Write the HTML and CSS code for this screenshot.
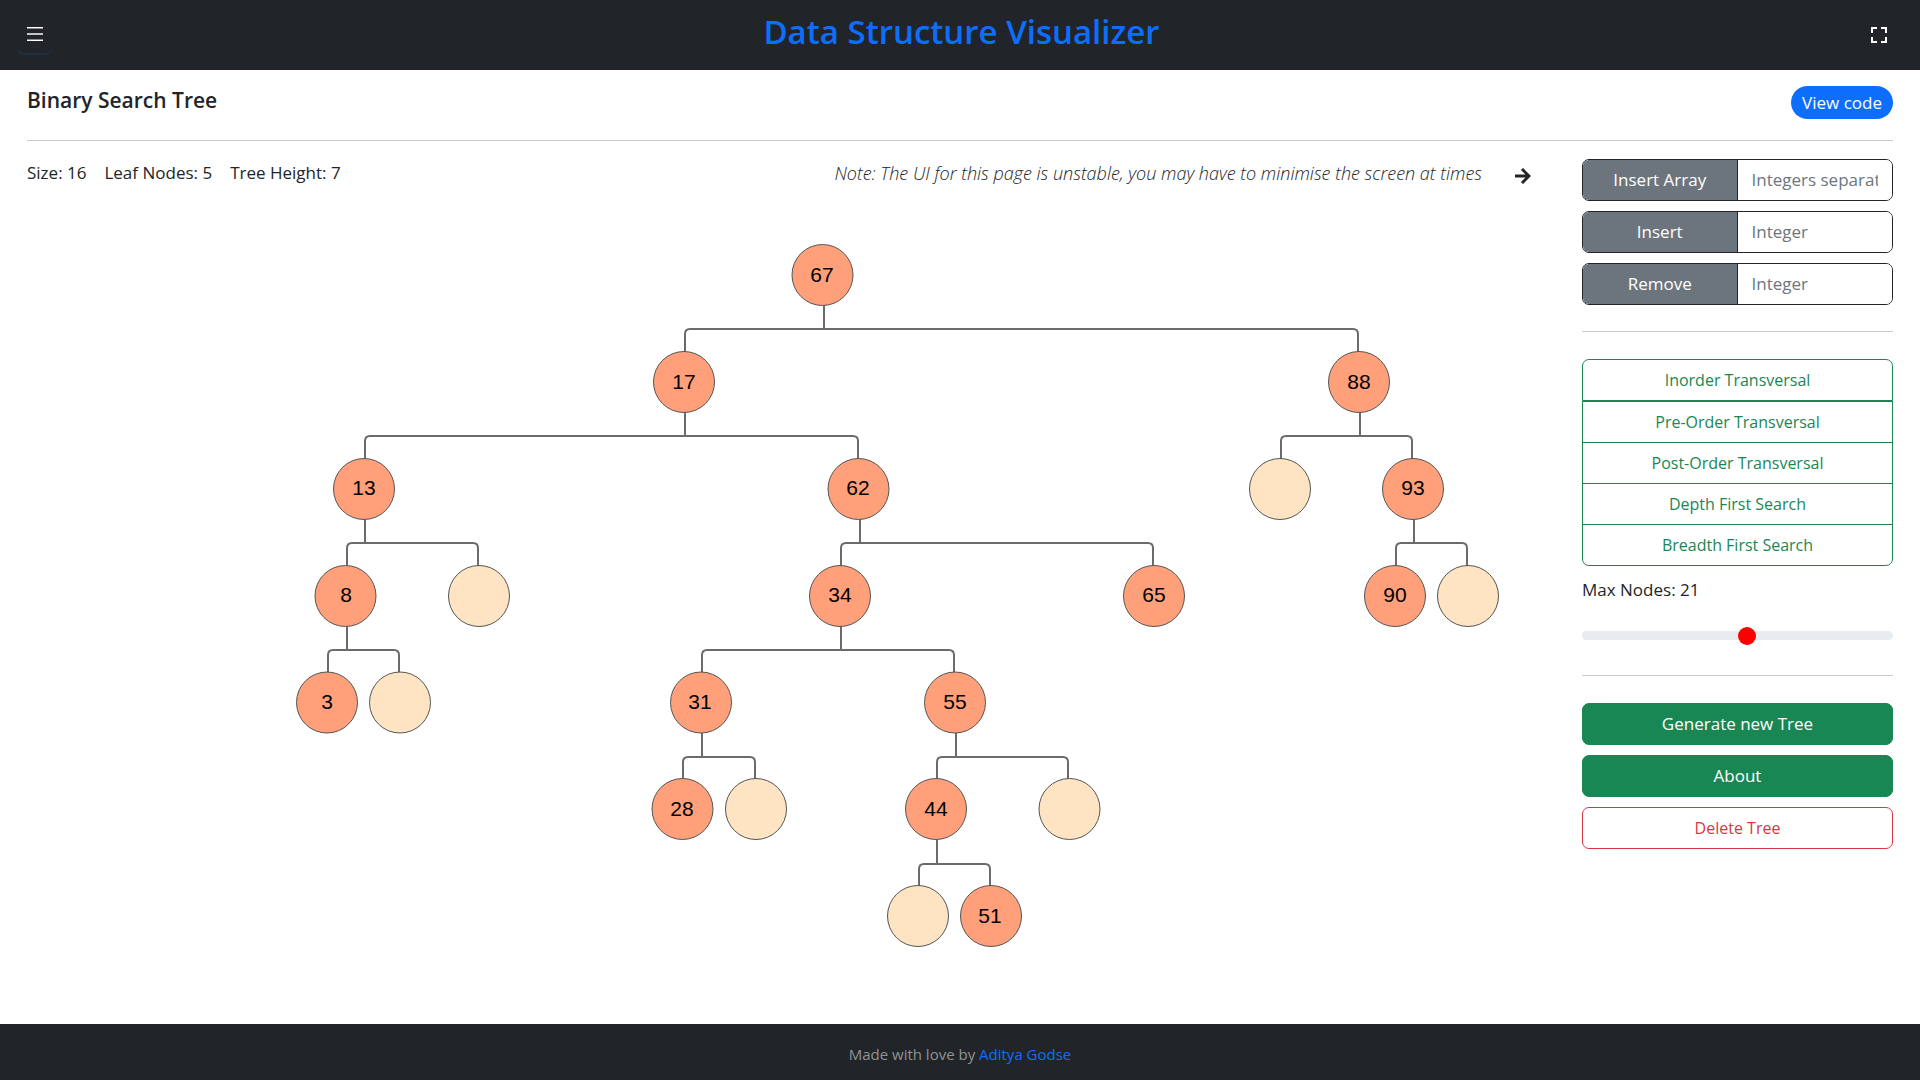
FILE: index.html
```html
<!DOCTYPE html>
<html lang="en">
<head>
<meta charset="utf-8">
<meta name="viewport" content="width=device-width, initial-scale=1">
<title>Data Structure Visualizer</title>
<link rel="stylesheet" href="styles.css">
</head>
<body>
<header class="topbar">
  <button class="icon-button menu-button" type="button" aria-label="Menu">
    <svg width="16" height="14" viewBox="0 0 16 14" shape-rendering="crispEdges"><path fill="#fff" d="M0 0h16v1H0zM0 13h16v1H0z"/><path fill="#888a8c" d="M0 1h16v1H0zM0 12h16v1H0z"/><path fill="#c4c5c6" d="M0 6h16v2H0z"/></svg>
  </button>
  <h1 class="brand">Data Structure Visualizer</h1>
  <button class="icon-button" type="button" aria-label="Full screen">
    <svg width="16" height="16" viewBox="0 0 16 16" fill="none" stroke="#fff" stroke-width="2"><path d="M1 6V1h5M10 1h5v5M15 10v5h-5M6 15H1v-5"/></svg>
  </button>
</header>

<main class="page">
  <div class="page-head">
    <h2 class="page-title">Binary Search Tree</h2>
    <a class="badge" href="#code">View code</a>
  </div>
  <div class="workspace">
    <section class="viewer">
      <div class="info">
        <span>Size: 16</span>
        <span>Leaf Nodes: 5</span>
        <span>Tree Height: 7</span>
        <em class="note">Note: The UI for this page is unstable, you may have to minimise the screen at times</em>
        <button class="icon-button" type="button" aria-label="Hide controls">
          <svg width="16" height="16" viewBox="0 0 16 16" fill="none" stroke="#212529" stroke-width="3"><path d="M0 8h14M7 1l7 7-7 7"/></svg>
        </button>
      </div>
      <svg class="tree" viewBox="27 210 1555 780" role="img" aria-label="Binary search tree">
        <defs><circle id="node" r="30.5"/></defs>
        <g class="links">
          <path d="M824 305V329M685 352V334q0-5 5-5H1353q5 0 5 5V352"/>
          <path d="M685 412V436M365 459V441q0-5 5-5H853q5 0 5 5V459"/>
          <path d="M1360 412V436M1281 459V441q0-5 5-5H1407q5 0 5 5V459"/>
          <path d="M365 519V543M347 566V548q0-5 5-5H473q5 0 5 5V566"/>
          <path d="M860 519V543M841 566V548q0-5 5-5H1148q5 0 5 5V566"/>
          <path d="M1414 519V543M1396 566V548q0-5 5-5H1462q5 0 5 5V566"/>
          <path d="M347 626V650M328 673V655q0-5 5-5H394q5 0 5 5V673"/>
          <path d="M841 626V650M702 673V655q0-5 5-5H949q5 0 5 5V673"/>
          <path d="M702 733V757M683 780V762q0-5 5-5H750q5 0 5 5V780"/>
          <path d="M956 733V757M937 780V762q0-5 5-5H1063q5 0 5 5V780"/>
          <path d="M937 840V864M919 887V869q0-5 5-5H985q5 0 5 5V887"/>
        </g>
        <g class="filled">
          <use href="#node" x="822.5" y="275"/>
          <use href="#node" x="684" y="382"/>
          <use href="#node" x="1359" y="382"/>
          <use href="#node" x="364" y="489"/>
          <use href="#node" x="858.5" y="489"/>
          <use href="#node" x="1413" y="489"/>
          <use href="#node" x="345.5" y="596"/>
          <use href="#node" x="840" y="596"/>
          <use href="#node" x="1154" y="596"/>
          <use href="#node" x="1395" y="596"/>
          <use href="#node" x="327" y="702.5"/>
          <use href="#node" x="701" y="702.5"/>
          <use href="#node" x="955" y="702.5"/>
          <use href="#node" x="682.5" y="809"/>
          <use href="#node" x="936" y="809"/>
          <use href="#node" x="991" y="916"/>
        </g>
        <g class="vacant">
          <use href="#node" x="1280" y="489"/>
          <use href="#node" x="479" y="596"/>
          <use href="#node" x="1468" y="596"/>
          <use href="#node" x="400" y="702.5"/>
          <use href="#node" x="756" y="809"/>
          <use href="#node" x="1069.5" y="809"/>
          <use href="#node" x="918" y="916"/>
        </g>
        <g class="values">
          <text x="822" y="282">67</text>
          <text x="684" y="389">17</text>
          <text x="1359" y="389">88</text>
          <text x="364" y="495">13</text>
          <text x="858" y="495">62</text>
          <text x="1413" y="495">93</text>
          <text x="346" y="602">8</text>
          <text x="840" y="602">34</text>
          <text x="1154" y="602">65</text>
          <text x="1395" y="602">90</text>
          <text x="327" y="709">3</text>
          <text x="700" y="709">31</text>
          <text x="955" y="709">55</text>
          <text x="682" y="816">28</text>
          <text x="936" y="816">44</text>
          <text x="990" y="923">51</text>
        </g>
      </svg>
    </section>

    <aside class="controls">
      <div class="stack">
        <div class="input-group">
          <button type="button">Insert Array</button>
          <input type="text" aria-label="Array to insert" placeholder="Integers separated by comma">
        </div>
        <div class="input-group">
          <button type="button">Insert</button>
          <input type="text" aria-label="Value to insert" placeholder="Integer">
        </div>
        <div class="input-group">
          <button type="button">Remove</button>
          <input type="text" aria-label="Value to remove" placeholder="Integer">
        </div>
      </div>
      <hr class="rule">
      <div class="button-group">
        <button type="button">Inorder Transversal</button>
        <button type="button">Pre-Order Transversal</button>
        <button type="button">Post-Order Transversal</button>
        <button type="button">Depth First Search</button>
        <button type="button">Breadth First Search</button>
      </div>
      <label class="range-label" for="max-nodes">Max Nodes: 21</label>
      <input class="range" id="max-nodes" type="range" min="5" max="35" value="21">
      <hr class="rule">
      <div class="stack">
        <button class="button" type="button">Generate new Tree</button>
        <button class="button" type="button">About</button>
        <button class="button button-danger" type="button">Delete Tree</button>
      </div>
    </aside>
  </div>
</main>

<footer class="footer">
  <p>Made with love by <a href="#author">Aditya Godse</a></p>
</footer>
</body>
</html>
```
FILE: styles.css
```css
* {
  box-sizing: border-box;
}

body {
  margin: 0;
  min-height: 100vh;
  display: flex;
  flex-direction: column;
  background: #fff;
  color: #212529;
  font: 400 17px/26px "Open Sans", "Noto Sans", sans-serif;
}

h1, h2, p {
  margin: 0;
}

button, input {
  font: inherit;
  margin: 0;
}

button {
  cursor: pointer;
}

a {
  color: #0d6efd;
  text-decoration: none;
}

.topbar {
  display: flex;
  align-items: center;
  justify-content: space-between;
  height: 70px;
  padding: 0 33px 0 18px;
  background: #212529;
}

.brand {
  color: #0d6efd;
  font-size: 33px;
  font-weight: 600;
  line-height: 42px;
  padding-bottom: 6px;
}

.icon-button {
  display: flex;
  align-items: center;
  justify-content: center;
  height: 32px;
  padding: 0;
  border: 0;
  border-radius: 6px;
  background: transparent;
}

.menu-button {
  width: 34px;
  height: 38px;
  margin-bottom: 2px;
  box-shadow: 0 2px 0 #1f3040;
}

.page {
  flex: 1;
  padding: 16px 27px 0;
}

.page-head {
  display: flex;
  align-items: flex-start;
  justify-content: space-between;
  height: 55px;
  border-bottom: 1px solid #c8c9ca;
}

.page-title {
  font-size: 21px;
  font-weight: 600;
  line-height: 28px;
}

.badge {
  padding: 4px 11px 3px;
  border-radius: 17px;
  background: #0d6efd;
  color: #fff;
}

.workspace {
  display: grid;
  grid-template-columns: minmax(0, 5fr) minmax(0, 1fr);
  padding-top: 18px;
}

.info {
  display: flex;
  gap: 18px;
  padding: 1px 51px 0 0;
  height: 30px;
}

.note {
  margin-left: auto;
  margin-right: 15px;
  font-size: 18px;
  font-weight: 300;
}

.tree {
  display: block;
  width: 100%;
  margin-top: 21px;
}

.links {
  fill: none;
  stroke: #6b6b6b;
  stroke-width: 2px;
}

.filled {
  fill: #ffa07a;
  stroke: #555;
}

.vacant {
  fill: #ffe4c4;
  stroke: #555;
}

.values {
  fill: #000;
  font: 400 21px "Liberation Sans", Arial, sans-serif;
  text-anchor: middle;
}

.stack {
  display: grid;
  gap: 10px;
}

.input-group {
  display: grid;
  grid-template-columns: 1fr 1fr;
  height: 42px;
  border: 1px solid #212529;
  border-radius: 7px;
  overflow: hidden;
}

.input-group button {
  padding: 0;
  border: 0;
  border-right: 1px solid #212529;
  background: #6c757d;
  color: #fff;
}

.input-group input {
  min-width: 0;
  padding: 0 14px;
  border: 0;
  background: #fff;
}

.input-group input::placeholder {
  color: #6c757d;
  opacity: 1;
}

.rule {
  height: 1px;
  margin: 26px 0 27px;
  border: 0;
  background: #c8c9ca;
}

.button-group {
  display: flex;
  flex-direction: column;
}

.button-group button {
  height: 42px;
  margin-top: -1px;
  padding: 0;
  border: 1px solid #198754;
  background: #fff;
  color: #198754;
  font-size: 16px;
}

.button-group button:first-child {
  margin-top: 0;
  margin-bottom: 1px;
  border-radius: 7px 7px 0 0;
}

.button-group button:last-child {
  border-radius: 0 0 7px 7px;
}

.range-label {
  display: block;
  margin-top: 11px;
}

.range {
  display: block;
  appearance: none;
  width: 100%;
  height: 18px;
  margin: 23px 0 31px;
  background: transparent;
}

.range::-webkit-slider-runnable-track {
  height: 9px;
  border-radius: 5px;
  background: #e9ecef;
}

.range::-webkit-slider-thumb {
  appearance: none;
  width: 18px;
  height: 18px;
  margin-top: -4px;
  border-radius: 50%;
  background: #f00;
}

.button {
  height: 42px;
  padding: 0;
  border: 1px solid #198754;
  border-radius: 7px;
  background: #198754;
  color: #fff;
}

.button-danger {
  border-color: #dc3545;
  background: #fff;
  color: #dc3545;
  font-size: 16px;
}

.footer {
  height: 56px;
  padding-top: 17px;
  background: #212529;
  color: #909294;
  font-size: 15px;
  text-align: center;
}
```
